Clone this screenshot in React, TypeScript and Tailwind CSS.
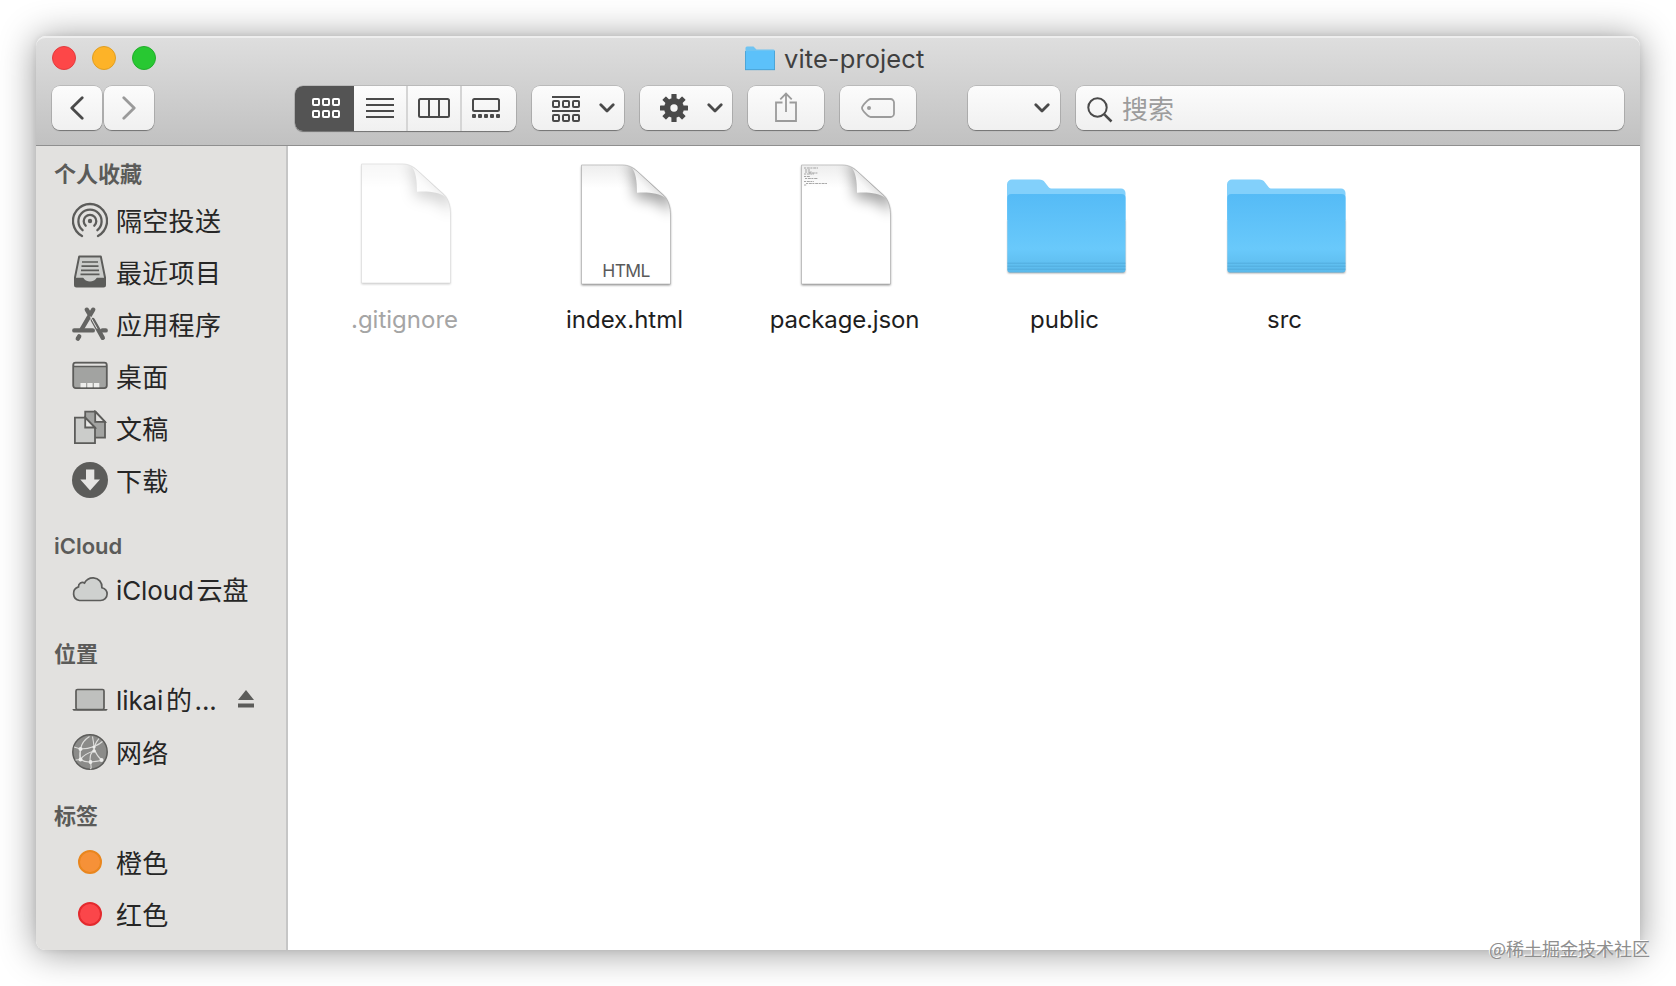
import type { ReactNode } from 'react'
import clsx from 'clsx'

const DARK = '#4a4a4a'
const SIDE = '#5c5c5a'

/* Sidebar icons, all on a 36x36 grid */

function Icon({ children }: { children: ReactNode }) {
  return (
    <svg viewBox="0 0 36 36" fill="none" className="w-9 h-9 shrink-0">
      {children}
    </svg>
  )
}

const airdrop = (
  <Icon>
    <g stroke={SIDE} strokeWidth="2.3" strokeLinecap="round">
      <path d="M10 34a17 17 0 1 1 16 0" />
      <path d="M10.600 28.200a11.600 11.600 0 1 1 14.800 0" />
      <path d="M13.700 23.700a6.300 6.300 0 1 1 8.600 0" />
    </g>
    <circle cx="18" cy="19" r="2.200" fill={SIDE} />
  </Icon>
)

const recents = (
  <Icon>
    <path d="M7.200 2.400h21.600l4.200 21V31a1.500 1.500 0 0 1-1.500 1.500h-27A1.500 1.500 0 0 1 3 31v-7.600z" fill="#cbccca" stroke={SIDE} strokeWidth="2" strokeLinejoin="round" />
    <path d="M3 23.800h8c1 0 1.200 3.700 7 3.700s6-3.700 7-3.700h8V31a1.500 1.500 0 0 1-1.500 1.500h-27A1.500 1.500 0 0 1 3 31z" fill={SIDE} />
    <path d="M10 8h16M9.500 12.200h17M9 16.300h18M8.500 20.400h19" stroke={SIDE} strokeWidth="1.700" />
  </Icon>
)

const apps = (
  <Icon>
    <g stroke="#646462" strokeWidth="4.400" strokeLinecap="round">
      <path d="M21.200 3.700L9.800 23M14.800 3.700l3 5" />
      <path d="M2.300 24.400h18.500M30.500 24.400h3.200M20.800 14l10 17.800M7.200 30.300l-1.400 2.400" />
    </g>
    <path d="M18.300 10.500l6.800 12.200" stroke="#e2e1df" strokeWidth="1" />
  </Icon>
)

const desktop = (
  <Icon>
    <rect x="1.200" y="4.700" width="33.600" height="25.400" rx="2.500" fill="#a2a3a1" stroke={SIDE} strokeWidth="1.800" />
    <path d="M2.500 6.900h31" stroke="#e2e1df" strokeWidth="2.200" />
    <path d="M1.500 8.600h33" stroke={SIDE} strokeWidth="1.500" />
    <path d="M8.500 25h5.500v4.300H8.500zM15.300 25h5.300v4.300h-5.300zM22 25h5.300v4.300H22z" fill="#eeeeec" />
  </Icon>
)

const documents = (
  <Icon>
    <g stroke={SIDE} strokeWidth="1.800">
      <path d="M13.200 1.700h10.300L33 11.800v15.900H13.200z" fill="#a2a3a1" />
      <path d="M23.200 1.700L33 11.800h-9.800z" fill="#e2e1df" />
      <path d="M2.900 7.700h10.300l9.800 9.800v15.700H2.900z" fill="#cbccca" />
      <path d="M13.200 7.700l9.800 9.800h-9.800z" fill="#e8e8e6" />
    </g>
  </Icon>
)

const downloads = (
  <Icon>
    <circle cx="18" cy="18" r="18" fill={SIDE} />
    <path d="M14 7.500h8.300v10h5.700L18.100 28.500 8.300 17.500H14z" fill="#e6e5e3" />
  </Icon>
)

const cloud = (
  <Icon>
    <path
      d="M7.500 28.500a7 7 0 0 1-1-13.600c-.3-3.600 3.500-5.600 6-3.900C14.500 7.200 18 5.800 21.400 5.900c5.200.2 9 4.500 8.500 9.800 3 .8 5.200 3.200 5.200 6.200 0 3.700-2.900 6.600-6.600 6.600z"
      fill="#cfd1cf"
      stroke={SIDE}
      strokeWidth="1.700"
    />
  </Icon>
)

const laptop = (
  <Icon>
    <rect x="4" y="7.500" width="28" height="20" rx="1.500" fill="#bfc0be" stroke={SIDE} strokeWidth="1.700" />
    <path d="M.5 26.900h35c0 1-.8 1.800-2 1.800h-31c-1.200 0-2-.8-2-1.800z" fill={SIDE} />
  </Icon>
)

const network = (
  <Icon>
    <circle cx="18" cy="18" r="17.200" fill="#8b8b89" stroke={SIDE} strokeWidth="1.500" />
    <g stroke="#dededc" strokeWidth="1.100">
      <path d="M17.500 2.500Q10 7 8.500 15T8.500 26M2 13l6.500 2Q16 15 22 12.500T30.500 7.500M20.500 2.500Q21.500 8 22 12.500T21 17Q17 21 18.500 28.500T18 34.500" />
      <path d="M27 4.500Q23 9 22 15Q25 22 29.500 26M3.500 26L8.500 25.500Q13 28.500 18.500 28T29.500 26.500M8.500 15Q8 20 8.500 25.500M22 17Q12 20 8.500 25.500" />
    </g>
    <g fill="#ececea">
      <circle cx="8.500" cy="15" r="2" />
      <circle cx="22" cy="13" r="1.600" />
      <circle cx="22" cy="17" r="1.700" />
      <circle cx="8.500" cy="25.500" r="2" />
      <circle cx="18.500" cy="28" r="1.900" />
      <circle cx="29.500" cy="26" r="2" />
    </g>
  </Icon>
)

function Tag({ className }: { className: string }) {
  return (
    <span className="w-9 flex justify-center shrink-0">
      <span className={clsx('w-6 h-6 rounded-full border-2', className)} />
    </span>
  )
}

const sections = [
  {
    title: '个人收藏',
    items: [
      { label: '隔空投送', icon: airdrop },
      { label: '最近项目', icon: recents },
      { label: '应用程序', icon: apps },
      { label: '桌面', icon: desktop },
      { label: '文稿', icon: documents },
      { label: '下载', icon: downloads },
    ],
  },
  { title: 'iCloud', items: [{ label: 'iCloud 云盘', icon: cloud, latin: true }] },
  {
    title: '位置',
    items: [
      { label: 'likai 的 ...', icon: laptop, latin: true, eject: true },
      { label: '网络', icon: network },
    ],
  },
  {
    title: '标签',
    items: [
      { label: '橙色', icon: <Tag className="bg-[#f69138] border-[#e9861e]" /> },
      { label: '红色', icon: <Tag className="bg-[#fb464a] border-[#e32a2e]" /> },
    ],
  },
]

function Sidebar() {
  return (
    <aside className="w-[252px] shrink-0 bg-[#e2e1df] border-r-2 border-[#c6c6c6] pt-2 pl-[18px] flex flex-col gap-[18px] rounded-bl-[9px]">
      {sections.map((section) => (
        <div key={section.title}>
          <h2 className={clsx('h-10 flex items-center text-[22px] font-semibold text-[#5b5b59]', section.title === 'iCloud' && 'pt-1')}>
            {section.title}
          </h2>
          <ul className="pl-[18px]">
            {section.items.map((item) => (
              <li key={item.label} className="h-[52px] flex items-center gap-2 text-[26px] text-[#262626]">
                {item.icon}
                <span
                  className={clsx(
                    'whitespace-nowrap',
                    'latin' in item ? 'pt-px tracking-[-0.1px] [word-spacing:-4.5px]' : 'pt-0.5 tracking-[0.3px]',
                  )}
                >
                  {item.label}
                </span>
                {'eject' in item && (
                  <svg viewBox="0 0 16 18" className="w-4 h-[18px] ml-auto mr-8 -mt-0.5" fill={SIDE}>
                    <path d="M8 0l8 10H0zM0 13.500h16v4H0z" />
                  </svg>
                )}
              </li>
            ))}
          </ul>
        </div>
      ))}
    </aside>
  )
}

/* Toolbar */

function Button({ className, children }: { className?: string; children?: ReactNode }) {
  return (
    <button
      className={clsx(
        'h-[44px] shrink-0 flex items-center rounded-[8px] bg-linear-to-b from-[#fcfcfc] to-[#f0f0f0] shadow-[0_0_0_0.5px_rgba(0,0,0,0.22),0_1px_1px_rgba(0,0,0,0.35)]',
        className,
      )}
    >
      {children}
    </button>
  )
}

function Chevron() {
  return (
    <svg viewBox="0 0 16 10" className="w-4 h-2.5" fill="none">
      <path d="M1.800 1.800L8 8l6.200-6.200" stroke={DARK} strokeWidth="2.800" strokeLinecap="round" strokeLinejoin="round" />
    </svg>
  )
}

function Squares({ y }: { y: number }) {
  return (
    <>
      {[1, 11, 21].map((x) => (
        <rect key={x} x={x} y={y} width="6" height="6" rx="1" />
      ))}
    </>
  )
}

function ViewSwitch() {
  return (
    <div className="ml-[141px] w-[221px] h-[45px] shrink-0 flex rounded-[8px] overflow-hidden bg-linear-to-b from-[#fcfcfc] to-[#f0f0f0] shadow-[0_0_0_0.5px_rgba(0,0,0,0.22),0_1px_1px_rgba(0,0,0,0.35)]">
      <div className="w-[59px] pl-0.5 flex items-center justify-center bg-[#545454]">
        <svg viewBox="0 0 28 20" className="w-7 h-5" fill="none" stroke="#fff" strokeWidth="2">
          <Squares y={1} />
          <Squares y={13} />
        </svg>
      </div>
      <div className="w-[52px] flex items-center justify-center">
        <svg viewBox="0 0 28 20" className="w-7 h-5" fill="none" stroke={DARK} strokeWidth="2">
          <path d="M0 1h28M0 7h28M0 13h28M0 19h28" />
        </svg>
      </div>
      <div className="w-[54px] border-l-2 border-[#d5d5d5] flex items-center justify-center">
        <svg viewBox="0 0 32 20" className="w-8 h-5" fill="none" stroke={DARK} strokeWidth="2">
          <rect x="1" y="1" width="30" height="18" rx="1.500" />
          <path d="M11 1v18M21 1v18" />
        </svg>
      </div>
      <div className="w-[56px] pr-1.5 border-l-2 border-[#d5d5d5] flex items-center justify-center">
        <svg viewBox="0 0 28 20" className="w-7 h-5" fill="none">
          <rect x="1" y="1" width="26" height="12" rx="1.500" stroke={DARK} strokeWidth="2" />
          {[0, 6, 12, 18, 24].map((x) => (
            <rect key={x} x={x} y="16" width="4" height="4" rx="1" fill={DARK} />
          ))}
        </svg>
      </div>
    </div>
  )
}

function Gear() {
  return (
    <svg viewBox="-14 -14 28 28" className="w-7 h-7" fill={DARK}>
      {[0, 45, 90, 135].map((angle) => (
        <rect key={angle} x="-2.600" y="-14" width="5.200" height="28" rx="0.600" transform={`rotate(${angle})`} />
      ))}
      <circle r="10" />
      <circle r="3.700" fill="#f6f6f6" />
    </svg>
  )
}

function SmallFolder() {
  return (
    <svg viewBox="0 0 30 25" className="w-[30px] h-[25px]">
      <path d="M.5 2A1.500 1.500 0 0 1 2 .5h6.500L11.500 3.500H28.500A1.500 1.500 0 0 1 30 5v18.500H.5z" fill="#6fc4f2" />
      <path d="M0 6.500A1.500 1.500 0 0 1 1.500 5h27A1.500 1.500 0 0 1 30 6.500V24H0z" fill="#5cc1fa" />
      <path d="M0 23.700h30M.4 5v19M29.600 5v19" stroke="#4a9fcf" strokeWidth="0.900" />
    </svg>
  )
}

function Header() {
  return (
    <header className="h-[110px] shrink-0 rounded-t-[10px] bg-linear-to-b from-[#dedede] to-[#c1c1c1] border-t-2 border-t-[#eeeeee] border-b border-b-[#8f8f8f]">
      <div className="h-[47px] pl-4 flex items-center">
        <div className="flex gap-4 -mt-[7px]">
          <span className="w-6 h-6 rounded-full bg-[#fd4748] border border-[#e23c3e]" />
          <span className="w-6 h-6 rounded-full bg-[#fdb328] border border-[#e09e22]" />
          <span className="w-6 h-6 rounded-full bg-[#28c832] border border-[#22ae2b]" />
        </div>
        <div className="ml-[589px] -mt-[6px] flex items-center gap-[9px]">
          <SmallFolder />
          <h1 className="text-[25.500px] leading-8 tracking-[0.1px] text-[#404040]">vite-project</h1>
        </div>
      </div>

      <div className="h-[46px] pl-4 flex items-center">
        <Button className="w-[50px] justify-center">
          <svg viewBox="0 0 14 24" className="w-3.5 h-6" fill="none">
            <path d="M12.200 1.700L1.800 12l10.400 10.300" stroke={DARK} strokeWidth="2.800" strokeLinecap="round" strokeLinejoin="round" />
          </svg>
        </Button>
        <Button className="w-[50px] ml-0.5 justify-center">
          <svg viewBox="0 0 14 24" className="w-3.5 h-6" fill="none">
            <path d="M1.800 1.700L12.200 12 1.800 22.300" stroke="#9a9a9a" strokeWidth="2.800" strokeLinecap="round" strokeLinejoin="round" />
          </svg>
        </Button>
        <ViewSwitch />
        <Button className="w-[92px] ml-4 pl-5 gap-[19px]">
          <svg viewBox="0 0 28 27" className="w-7 h-[27px] mt-[3px]" fill="none" stroke={DARK} strokeWidth="2">
            <path d="M0 1h28M0 15h28" />
            <Squares y={5} />
            <Squares y={19} />
          </svg>
          <Chevron />
        </Button>
        <Button className="w-[92px] ml-4 pl-5 gap-[19px]">
          <Gear />
          <Chevron />
        </Button>
        <Button className="w-[76px] ml-4 justify-center">
          <svg viewBox="0 0 22 30" className="w-[22px] h-[30px] -mt-0.5" fill="none" stroke="#9b9b9b" strokeWidth="1.800">
            <path d="M7.500 10.500H1V29h20V10.500h-6.500M11 1.500V20M5.300 7.300L11 1.500l5.700 5.800" />
          </svg>
        </Button>
        <Button className="w-[76px] ml-4 justify-center">
          <svg viewBox="0 0 34 20" className="w-[34px] h-5" fill="none">
            <path d="M9.500 1H29.500A3.500 3.500 0 0 1 33 4.500v11a3.500 3.500 0 0 1-3.500 3.500H9.500C7.500 19 1 12.500 1 10s6.500-9 8.500-9z" stroke="#9b9b9b" strokeWidth="1.800" />
            <circle cx="8" cy="10" r="2" fill="#9b9b9b" />
          </svg>
        </Button>
        <Button className="w-[92px] ml-[52px] justify-end pr-[10px]">
          <Chevron />
        </Button>
        <Button className="w-[548px] ml-4 pl-[11px]">
          <svg viewBox="0 0 26 26" className="w-[26px] h-[26px] mt-[3px]" fill="none" stroke={DARK} strokeWidth="2">
            <circle cx="10.500" cy="10.500" r="9.200" />
            <path d="M17.300 17.300l7.200 7.200" strokeWidth="2.500" />
          </svg>
          <span className="ml-[9px] pt-[3px] text-[26px] text-[#9c9c9c]">搜索</span>
        </Button>
      </div>
    </header>
  )
}

/* Files */

const PAGE = 'M19.500 5H60c7 0 11 2.500 15 6l27 24.500c4.500 4.500 6.500 12 6.500 19.500v69h-89z'

function Page({ id, badge, preview }: { id: string; badge?: string; preview?: boolean }) {
  return (
    <svg viewBox="0 0 128 128" className="w-32 h-32" fill="none">
      <defs>
        <clipPath id={`${id}-clip`}>
          <path d={PAGE} />
        </clipPath>
        <linearGradient id={`${id}-top`} x1="0" y1="5" x2="0" y2="28" gradientUnits="userSpaceOnUse">
          <stop offset="0" stopColor="#ededed" />
          <stop offset="1" stopColor="#fff" />
        </linearGradient>
        <linearGradient id={`${id}-flap`} x1="75" y1="33" x2="86" y2="22" gradientUnits="userSpaceOnUse">
          <stop offset="0" stopColor="#fff" />
          <stop offset="0.600" stopColor="#f8f8f8" />
          <stop offset="1" stopColor="#e6e6e6" />
        </linearGradient>
        <filter id={`${id}-blur`} x="-60%" y="-60%" width="220%" height="220%">
          <feGaussianBlur stdDeviation="7" />
        </filter>
        <filter id={`${id}-drop`} x="-10%" y="-10%" width="120%" height="120%">
          <feGaussianBlur stdDeviation="1.200" />
        </filter>
      </defs>
      <path d={PAGE} fill="#000" opacity="0.450" transform="translate(0 1.200)" filter={`url(#${id}-drop)`} />
      <path d={PAGE} fill={`url(#${id}-top)`} />
      <g clipPath={`url(#${id}-clip)`}>
        <path d="M64 4c6 5 8 16 9 34 16 1 28 5 36 16V4z" fill="#000" opacity="0.360" filter={`url(#${id}-blur)`} />
      </g>
      <path d="M70 8c3.500 4.500 5 12 5 24.700 12-.6 22 .3 29 5.500L75 11.300z" fill={`url(#${id}-flap)`} />
      <path d={PAGE} stroke="#a8a8a8" strokeWidth="0.600" />
      {preview && (
        <path
          d="M22 8h14M23 10h5M23 12h7M22 14h10M27 13h9M22 16.500h6M23 18.500h13M22 21.500h10M24 23.500h21M22 25h3"
          stroke="#808080"
          strokeWidth="0.800"
          strokeDasharray="2 0.800 3 0.600"
          opacity="0.850"
        />
      )}
      {badge && (
        <text x="64.300" y="117" textAnchor="middle" fontSize="17.500" fill="#5a5a5a" textLength="48">
          {badge}
        </text>
      )}
    </svg>
  )
}

function Folder({ id }: { id: string }) {
  return (
    <svg viewBox="0 0 128 128" className="w-32 h-32">
      <defs>
        <linearGradient id={`${id}-front`} x1="0" y1="0" x2="0" y2="1">
          <stop offset="0" stopColor="#55bbf6" />
          <stop offset="0.700" stopColor="#69c9fb" />
          <stop offset="1" stopColor="#5bb9ea" />
        </linearGradient>
        <filter id={`${id}-blur`}>
          <feGaussianBlur stdDeviation="1" />
        </filter>
      </defs>
      <path d="M6 60h117v53H6z" opacity="0.450" filter={`url(#${id}-blur)`} />
      <path d="M5 24.500a5 5 0 0 1 5-5h27c3 0 4.500.8 6 3l3.500 4.500c1 1.200 2 1.500 4 1.500H119a4.500 4.500 0 0 1 4.500 4.500V60H5z" fill="#82d0fb" />
      <path d="M5.300 38a4 4 0 0 1 4-4H119.500a4 4 0 0 1 4 4v71.500a3 3 0 0 1-3 3H8.300a3 3 0 0 1-3-3z" fill={`url(#${id}-front)`} />
      <path d="M5.500 103.200h118M5.500 106.200h118M5.500 109.200h118" stroke="#4ba3d2" strokeWidth="0.900" opacity="0.700" />
    </svg>
  )
}

const files = [
  { name: '.gitignore', icon: <Page id="gitignore" />, hidden: true },
  { name: 'index.html', icon: <Page id="index" badge="HTML" /> },
  { name: 'package.json', icon: <Page id="package" preview />, tight: true },
  { name: 'public', icon: <Folder id="public" /> },
  { name: 'src', icon: <Folder id="src" /> },
]

function FileGrid() {
  return (
    <main className="grow bg-white pl-2 pt-3.5 flex items-start">
      {files.map((file) => (
        <figure key={file.name} className="w-[220px] shrink-0 flex flex-col items-center">
          <div className={clsx(file.hidden && 'opacity-45 -mt-px mb-px')}>{file.icon}</div>
          <figcaption
            className={clsx(
              'mt-4 -ml-[3px] text-[24px] leading-8',
              file.hidden ? 'text-[#a5a5a5]' : 'text-[#1e1e1e]',
              file.tight && 'tracking-[-0.15px]',
            )}
          >
            {file.name}
          </figcaption>
        </figure>
      ))}
    </main>
  )
}

export default function App() {
  return (
    <div className="relative w-[1676px] h-[986px] overflow-hidden bg-white p-9 font-[Inter,'Noto_Sans_CJK_SC',sans-serif]">
      <div className="w-[1604px] h-[914px] flex flex-col rounded-t-[10px] rounded-bl-[9px] shadow-[0_2px_36px_rgba(0,0,0,0.42),0_0_6px_rgba(0,0,0,0.08)]">
        <Header />
        <div className="grow flex">
          <Sidebar />
          <FileGrid />
        </div>
      </div>
      <span className="absolute right-[26px] bottom-[25px] text-[18px] leading-[26px] whitespace-nowrap font-['Noto_Sans_CJK_SC',sans-serif] text-[#8e8e8e] [text-shadow:-1px_-1px_0_#fff]">
        @稀土掘金技术社区
      </span>
    </div>
  )
}
